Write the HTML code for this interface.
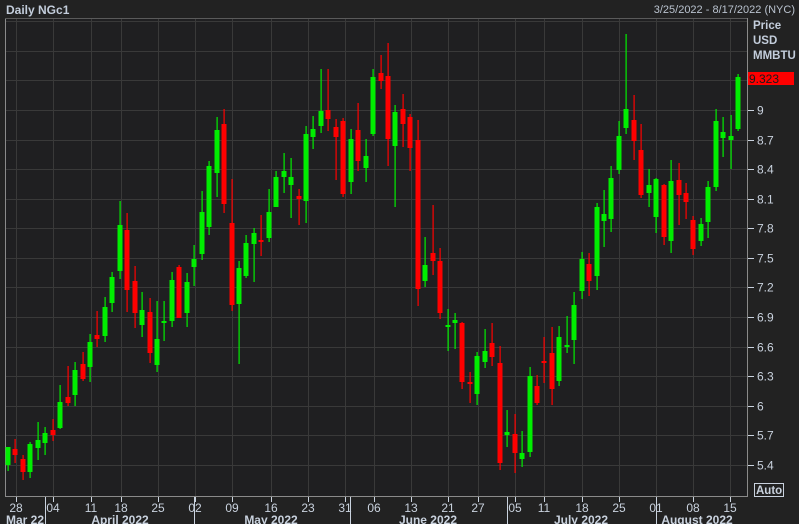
<!DOCTYPE html>
<html><head><meta charset="utf-8"><style>
html,body{margin:0;padding:0;background:#222222;}
body{width:799px;height:524px;overflow:hidden;font-family:"Liberation Sans",sans-serif;}
</style></head><body>
<svg id="s" width="799" height="524" xmlns="http://www.w3.org/2000/svg" style="position:absolute;left:0;top:0">
<rect x="0" y="0" width="799" height="524" fill="#222222"/>
<rect x="5" y="18" width="742" height="478" fill="#1f1f21"/>
<g id="grid" stroke="#393939" stroke-width="1"></g>
<line x1="5.5" y1="18" x2="5.5" y2="496" stroke="#8a8a8a"/>
<line x1="5" y1="18.5" x2="747" y2="18.5" stroke="#5a5a5a"/>
<line x1="747.5" y1="18" x2="747.5" y2="497" stroke="#8a8a8a"/>
<line x1="5" y1="496.5" x2="748" y2="496.5" stroke="#8a8a8a"/>
<g id="c"></g>
<g id="ax" font-size="12" fill="#c9d2de"></g>
<text x="6" y="14" font-size="12" font-weight="bold" fill="#c3cddb">Daily NGc1</text>
<text x="795" y="13" font-size="11" fill="#b9c2ce" text-anchor="end">3/25/2022 - 8/17/2022 (NYC)</text>
<text x="753" y="29" font-size="11.5" font-weight="bold" fill="#c3cddb">Price</text>
<text x="753" y="44" font-size="11.5" font-weight="bold" fill="#c3cddb">USD</text>
<text x="753" y="59" font-size="11.5" font-weight="bold" fill="#c3cddb">MMBTU</text>
<rect x="748" y="72" width="46" height="13" fill="#ff0000"/>
<text x="749" y="83" font-size="12" fill="#1a1a1a">9.323</text>
<rect x="754.5" y="483.5" width="29" height="13" fill="none" stroke="#c9d2de"/>
<text x="756" y="494" font-size="11.5" font-weight="bold" fill="#c9d2de">Auto</text>
</svg>
<script>
var NS="http://www.w3.org/2000/svg";
function el(p,t,a,txt){var e=document.createElementNS(NS,t);for(var k in a)e.setAttribute(k,a[k]);if(txt!==undefined)e.textContent=txt;p.appendChild(e);return e;}
var g=document.getElementById('grid'),ax=document.getElementById('ax'),c=document.getElementById('c');
// horizontal grid
var labs=["9","8.7","8.4","8.1","7.8","7.5","7.2","6.9","6.6","6.3","6","5.7","5.4"];
for(var i=-3;i<=13;i++){var y=Math.round(110+i*29.58)+0.5;if(y<19||y>495)continue;el(g,'line',{x1:5,y1:y,x2:747,y2:y});
 if(i>=0&&i<13){el(ax,'line',{x1:748,y1:y,x2:754,y2:y,stroke:'#c9d2de'});el(ax,'text',{x:757,y:y+4},labs[i]);}}
var dx=[16,53,91,121,158,195,232,271,308,345,374,411,448,478,515,544,582,619,656,693,730];
var dl=["28","04","11","18","25","02","09","16","23","31","06","13","21","27","05","11","18","25","01","08","15"];
for(var i=0;i<dx.length;i++){var x=dx[i]+0.5;el(g,'line',{x1:x,y1:19,x2:x,y2:496});
 el(ax,'line',{x1:x,y1:497,x2:x,y2:502,stroke:'#c9d2de'});el(ax,'text',{x:dx[i],y:512,'text-anchor':'middle'},dl[i]);}
var ms=[45,194,350,507,656];ms.forEach(function(x){el(ax,'line',{x1:x+0.5,y1:497,x2:x+0.5,y2:524,stroke:'#c9d2de'});});
var mt=[["Mar 22",6,'start'],["April 2022",120,'middle'],["May 2022",271,'middle'],["June 2022",428,'middle'],["July 2022",581,'middle'],["August 2022",697,'middle']];
mt.forEach(function(m){el(ax,'text',{x:m[1],y:524,'text-anchor':m[2],'font-weight':'bold'},m[0]);});
// candles: [bodyTop, bodyBot, wickTop, wickBot, green?]
var A=[[347,365,347,371,1],[349,355,339,363,0],[359,372,355,380,0],[344,372,342,378,1],[340,348,322,360,1],[333,343,327,355,1],[330,335,319,341,0],[302,328,285,329,1],[297,303,266,306,0],[270,295,262,306,1],[264,279,252,281,0],[242,267,234,282,1],[235,239,211,247,0],[207,236,197,242,1],[177,203,172,212,1],[125,171,101,179,1],[130,190,113,212,0],[181,213,166,228,0],[210,225,192,237,1],[212,253,198,263,0],[239,265,201,272,1],[221,223,201,241,1],[180,221,172,227,1],[167,218,165,218,0],[182,213,173,227,1],[159,167,145,186,1],[112,154,91,160,1],[66,127,61,135,1],[30,73,17,97,1],[24,104,9,113,0],[123,205,79,211,0],[168,204,161,264,1],[143,176,135,178,1],[133,144,128,182,1]];
var B=[[200,201,175,216,0],[172,198,149,202,1],[137,167,131,167,1],[131,137,113,153,1],[137,145,118,178,1],[156,159,149,185,0],[94,161,86,183,1],[89,97,76,109,1],[71,86,29,93,1],[70,79,29,91,0],[87,97,79,140,0],[81,154,78,157,0],[99,142,89,154,1],[90,121,63,131,0],[116,128,99,142,1],[37,94,29,96,1],[33,41,15,49,0],[36,99,3,126,0],[72,106,65,167,1],[69,84,54,107,0],[77,108,74,131,0],[100,249,80,266,0],[225,241,197,247,1],[213,221,165,235,0],[221,273,208,279,0],[285,287,269,311,1],[280,283,273,309,1],[283,342,282,349,0],[342,344,332,363,0],[316,354,312,365,1],[311,322,289,328,1],[303,317,283,326,0],[323,423,306,430,0],[392,395,370,407,1]];
var C=[[404,423,384,443,0],[423,429,401,437,1],[346,422,337,427,1],[356,373,345,375,0],[331,333,307,353,0],[323,359,297,375,0],[307,351,296,356,1],[315,317,286,323,1],[275,310,262,334,1],[229,261,222,269,1],[234,251,223,266,0],[177,246,173,260,1],[184,191,160,217,1],[148,189,136,202,1],[106,140,91,144,1],[79,98,4,104,1],[90,111,65,130,0],[120,165,94,168,0],[155,163,139,177,1],[149,187,148,203,1],[155,207,154,215,0],[151,211,130,223,1],[150,165,133,195,0],[163,172,153,189,0],[190,219,186,225,0],[194,211,188,216,1],[157,192,151,208,1],[91,157,79,161,1],[102,108,87,127,1],[106,110,85,139,1],[47,99,44,101,1]];
var all=[];A.forEach(function(d){all.push([d[0]+100,d[1]+100,d[2]+100,d[3]+100,d[4]]);});
B.forEach(function(d){all.push([d[0]+40,d[1]+40,d[2]+40,d[3]+40,d[4]]);});
C.forEach(function(d){all.push([d[0]+30,d[1]+30,d[2]+30,d[3]+30,d[4]]);});
all.forEach(function(d,i){var x=Math.round(8+i*7.45);var col=d[4]?'#00ee00':'#ff0000';
 el(c,'rect',{x:x-0.5,y:d[2],width:1.2,height:Math.max(1,d[3]-d[2]),fill:col});
 var h=Math.max(2,d[1]-d[0]);el(c,'rect',{x:x-2.5,y:d[0],width:5,height:h,fill:col});});
</script>
</body></html>
